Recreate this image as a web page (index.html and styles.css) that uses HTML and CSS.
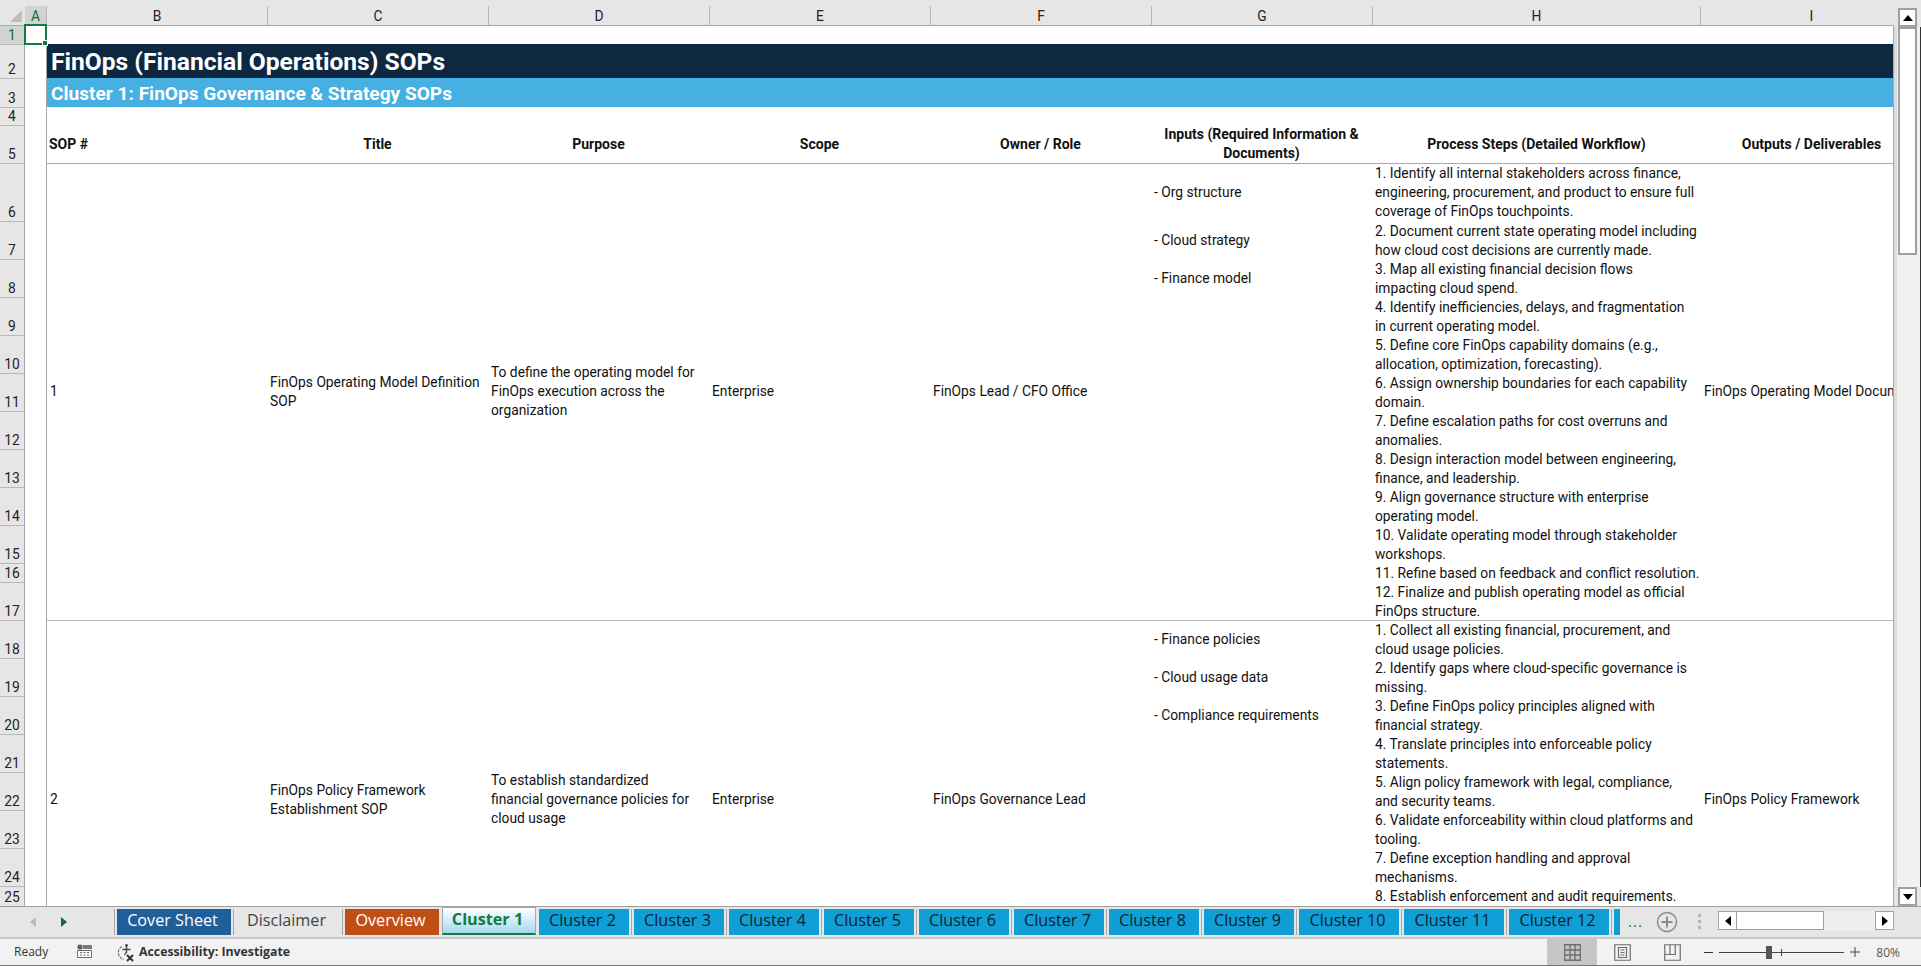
FILE: index.html
```html
<!DOCTYPE html>
<html lang="en">
<head>
<meta charset="UTF-8">
<title>FinOps SOPs - Excel</title>
<link rel="stylesheet" href="styles.css">
</head>
<body>
<div class="app">
    <div class="main">
        <div class="sheet">
            <div class="colbar">
                <div class="corner"></div>
                <div class="colhead selected">A</div>
                <div class="colhead">B</div>
                <div class="colhead">C</div>
                <div class="colhead">D</div>
                <div class="colhead">E</div>
                <div class="colhead">F</div>
                <div class="colhead">G</div>
                <div class="colhead">H</div>
                <div class="colhead">I</div>
            </div>
            <div class="body">
                <div class="rowheads">
                    <div class="rowhead selected h19">1</div>
                    <div class="rowhead h34">2</div>
                    <div class="rowhead h29">3</div>
                    <div class="rowhead h18">4</div>
                    <div class="rowhead h38">5</div>
                    <div class="rowhead h58">6</div>
                    <div class="rowhead h38">7</div>
                    <div class="rowhead h38">8</div>
                    <div class="rowhead h38">9</div>
                    <div class="rowhead h38">10</div>
                    <div class="rowhead h38">11</div>
                    <div class="rowhead h38">12</div>
                    <div class="rowhead h38">13</div>
                    <div class="rowhead h38">14</div>
                    <div class="rowhead h38">15</div>
                    <div class="rowhead h19">16</div>
                    <div class="rowhead h38">17</div>
                    <div class="rowhead h38">18</div>
                    <div class="rowhead h38">19</div>
                    <div class="rowhead h38">20</div>
                    <div class="rowhead h38">21</div>
                    <div class="rowhead h38">22</div>
                    <div class="rowhead h38">23</div>
                    <div class="rowhead h38">24</div>
                    <div class="rowhead h20">25</div>
                </div>
                <div class="col-a"></div>
                <div class="cells">
                    <div class="blank-top"></div>
                    <div class="title">FinOps (Financial Operations) SOPs</div>
                    <div class="subtitle">Cluster 1: FinOps Governance &amp; Strategy SOPs</div>
                    <div class="blank-mid"></div>
                    <div class="cols header-row">
                        <div class="left">SOP #</div>
                        <div>Title</div>
                        <div>Purpose</div>
                        <div>Scope</div>
                        <div>Owner / Role</div>
                        <div>Inputs (Required Information &amp;<br>Documents)</div>
                        <div>Process Steps (Detailed Workflow)</div>
                        <div>Outputs / Deliverables</div>
                    </div>
                    <div class="cols sop sop-first">
                        <div class="cell">1</div>
                        <div class="cell">FinOps Operating Model Definition<br>SOP</div>
                        <div class="cell">To define the operating model for<br>FinOps execution across the<br>organization</div>
                        <div class="cell">Enterprise</div>
                        <div class="cell">FinOps Lead / CFO Office</div>
                        <div class="inputs">
                            <p class="tall">- Org structure</p>
                            <p>- Cloud strategy</p>
                            <p>- Finance model</p>
                        </div>
                        <div class="steps">
                            <p>1. Identify all internal stakeholders across finance,<br>engineering, procurement, and product to ensure full<br>coverage of FinOps touchpoints.</p>
                            <p>2. Document current state operating model including<br>how cloud cost decisions are currently made.</p>
                            <p>3. Map all existing financial decision flows<br>impacting cloud spend.</p>
                            <p>4. Identify inefficiencies, delays, and fragmentation<br>in current operating model.</p>
                            <p>5. Define core FinOps capability domains (e.g.,<br>allocation, optimization, forecasting).</p>
                            <p>6. Assign ownership boundaries for each capability<br>domain.</p>
                            <p>7. Define escalation paths for cost overruns and<br>anomalies.</p>
                            <p>8. Design interaction model between engineering,<br>finance, and leadership.</p>
                            <p>9. Align governance structure with enterprise<br>operating model.</p>
                            <p>10. Validate operating model through stakeholder<br>workshops.</p>
                            <p>11. Refine based on feedback and conflict resolution.</p>
                            <p>12. Finalize and publish operating model as official<br>FinOps structure.</p>
                        </div>
                        <div class="cell">FinOps Operating Model Document</div>
                    </div>
                    <div class="cols sop sop-second">
                        <div class="cell">2</div>
                        <div class="cell">FinOps Policy Framework<br>Establishment SOP</div>
                        <div class="cell">To establish standardized<br>financial governance policies for<br>cloud usage</div>
                        <div class="cell">Enterprise</div>
                        <div class="cell">FinOps Governance Lead</div>
                        <div class="inputs">
                            <p>- Finance policies</p>
                            <p>- Cloud usage data</p>
                            <p>- Compliance requirements</p>
                        </div>
                        <div class="steps">
                            <p>1. Collect all existing financial, procurement, and<br>cloud usage policies.</p>
                            <p>2. Identify gaps where cloud-specific governance is<br>missing.</p>
                            <p>3. Define FinOps policy principles aligned with<br>financial strategy.</p>
                            <p>4. Translate principles into enforceable policy<br>statements.</p>
                            <p>5. Align policy framework with legal, compliance,<br>and security teams.</p>
                            <p>6. Validate enforceability within cloud platforms and<br>tooling.</p>
                            <p>7. Define exception handling and approval<br>mechanisms.</p>
                            <p>8. Establish enforcement and audit requirements.</p>
                        </div>
                        <div class="cell">FinOps Policy Framework</div>
                    </div>
                </div>
                <div class="active-cell"></div>
            </div>
        </div>
        <div class="vscroll">
            <div class="vbtn"><svg width="10" height="6" viewBox="0 0 10 6"><path d="M5 0 10 6H0Z"/></svg></div>
            <div class="vtrack"><div class="vthumb"></div></div>
            <div class="vbtn"><svg width="10" height="6" viewBox="0 0 10 6"><path d="M0 0H10L5 6Z"/></svg></div>
        </div>
    </div>

    <div class="tabbar">
        <div class="tabnav">
            <svg width="6" height="10" viewBox="0 0 6 10" class="nav-prev"><path d="M6 0V10L0 5Z"/></svg>
            <svg width="6" height="10" viewBox="0 0 6 10" class="nav-next"><path d="M0 0V10L6 5Z"/></svg>
        </div>
        <i class="sep"></i>
        <div class="tab tab-cover">Cover Sheet</div>
        <i class="sep"></i>
        <div class="tab tab-plain">Disclaimer</div>
        <i class="sep"></i>
        <div class="tab tab-overview">Overview</div>
        <div class="tab tab-active">Cluster 1</div>
        <div class="tab tab-cluster">Cluster 2</div>
        <i class="sep"></i>
        <div class="tab tab-cluster">Cluster 3</div>
        <i class="sep"></i>
        <div class="tab tab-cluster">Cluster 4</div>
        <i class="sep"></i>
        <div class="tab tab-cluster">Cluster 5</div>
        <i class="sep"></i>
        <div class="tab tab-cluster">Cluster 6</div>
        <i class="sep"></i>
        <div class="tab tab-cluster">Cluster 7</div>
        <i class="sep"></i>
        <div class="tab tab-cluster">Cluster 8</div>
        <i class="sep"></i>
        <div class="tab tab-cluster">Cluster 9</div>
        <i class="sep"></i>
        <div class="tab tab-cluster tab-wide">Cluster 10</div>
        <i class="sep"></i>
        <div class="tab tab-cluster tab-wide">Cluster 11</div>
        <i class="sep"></i>
        <div class="tab tab-cluster tab-wide">Cluster 12</div>
        <i class="sep"></i>
        <div class="tab tab-cluster tab-cut"></div>
        <div class="more">...</div>
        <svg class="add-sheet" width="22" height="22" viewBox="0 0 22 22"><circle cx="11" cy="11" r="9.5" fill="none" stroke="#8c8c8c" stroke-width="1.5"/><path d="M11 5.5v11M5.5 11h11" stroke="#8c8c8c" stroke-width="2"/></svg>
        <div class="grip"><b></b><b></b><b></b></div>
        <div class="hscroll">
            <div class="hbtn"><svg width="6" height="10" viewBox="0 0 6 10"><path d="M6 0V10L0 5Z"/></svg></div>
            <div class="hthumb"></div>
            <div class="htrack"></div>
            <div class="hbtn"><svg width="6" height="10" viewBox="0 0 6 10"><path d="M0 0V10L6 5Z"/></svg></div>
        </div>
    </div>

    <div class="statusbar">
        <span class="ready">Ready</span>
        <svg class="macro-icon" width="15" height="14" viewBox="0 0 15 14">
            <rect x="6" y="1" width="9" height="4" fill="#7a7a7a"/>
            <circle cx="3" cy="3" r="2.6" fill="#5f5f5f"/>
            <path d="M.5 6.5h14v7H.5z" fill="#fff" stroke="#6a6a6a"/>
            <path d="M3 8.5h2M6.5 8.5h2M10 8.5h2M3 11h2M6.5 11h2M10 11h2" stroke="#6a6a6a"/>
        </svg>
        <svg class="access-icon" width="20" height="20" viewBox="0 0 20 20">
            <path d="M6 3.5A7 7 0 0 0 8 16.5" fill="none" stroke="#777" stroke-width="1.2" stroke-dasharray="3 1"/>
            <circle cx="10.5" cy="2.5" r="1.4" fill="#444"/>
            <path d="M10.5 4v6M6.5 6.5h8M10.5 9l-2 3" fill="none" stroke="#444" stroke-width="1.3"/>
            <path d="M11 12l6 6M17 12l-6 6" stroke="#333" stroke-width="2"/>
        </svg>
        <span class="access-text">Accessibility: Investigate</span>
        <div class="status-right">
            <div class="view view-on">
                <svg width="17" height="17" viewBox="0 0 17 17"><path d="M.75.75h15.5v15.5H.75zM6 .75v15.5M11 .75v15.5M.75 6h15.5M.75 11h15.5" fill="none" stroke="#6e6e6e" stroke-width="1.3"/></svg>
            </div>
            <div class="view">
                <svg width="17" height="17" viewBox="0 0 17 17"><path d="M.75.75h15.5v15.5H.75zM4.5 3.5h8v10h-8zM6.5 6h4M6.5 8.5h4M6.5 11h4" fill="none" stroke="#6e6e6e" stroke-width="1.2"/></svg>
            </div>
            <div class="view">
                <svg width="17" height="17" viewBox="0 0 17 17"><path d="M.75.75h15.5v15.5H.75zM.75 10.5h10.5V.75M6 .75v9.75" fill="none" stroke="#6e6e6e" stroke-width="1.2"/></svg>
            </div>
            <div class="zoom">
                <span class="zoom-minus"></span>
                <div class="zoom-track"><span class="zoom-tick"></span><span class="zoom-thumb"></span></div>
                <svg class="zoom-plus" width="10" height="10" viewBox="0 0 10 10"><path d="M5 0v10M0 5h10" stroke="#444"/></svg>
                <span class="zoom-pct">80%</span>
            </div>
        </div>
    </div>
</div>
</body>
</html>
```
FILE: styles.css
```css
* {
    box-sizing: border-box;
}

body {
    margin: 0;
    font-family: Roboto, "Liberation Sans", sans-serif;
    font-size: 13.8px;
    color: #111;
    background-color: #e6e6e6;
}

p {
    margin: 0;
}

.app {
    width: 1921px;
    height: 966px;
    display: flex;
    flex-direction: column;
    overflow: hidden;
}

.main {
    height: 906px;
    flex-shrink: 0;
    display: flex;
}

.sheet {
    width: 1894px;
    display: flex;
    flex-direction: column;
}

/* column letters */
.colbar {
    height: 26px;
    flex-shrink: 0;
    padding-top: 6px;
    display: grid;
    grid-template-columns: 25px 22px 221px 221px 221px 221px 221px 221px 328px 221px;
    border-bottom: 1px solid #a8a8a8;
    overflow: hidden;
}

.corner {
    position: relative;
}

.corner::after {
    content: "";
    position: absolute;
    right: 3px;
    bottom: 3px;
    border-style: solid;
    border-width: 0 0 12px 12px;
    border-color: transparent transparent #bdbdbd transparent;
}

.colhead {
    display: flex;
    align-items: center;
    justify-content: center;
    border-right: 1px solid #b8b8b8;
    color: #222;
}

.colhead:last-child {
    border-right: none;
}

.colhead.selected {
    background-color: #d2d2d2;
    color: #0e6b3a;
}

/* row numbers + cells */
.body {
    position: relative;
    height: 880px;
    display: flex;
}

.rowheads {
    width: 25px;
    border-right: 1px solid #a8a8a8;
    overflow: hidden;
    flex-shrink: 0;
}

.rowhead {
    display: flex;
    align-items: flex-end;
    justify-content: center;
    line-height: 17px;
    border-bottom: 1px solid #b8b8b8;
    color: #222;
}

.rowhead.selected {
    background-color: #d2d2d2;
    color: #0e6b3a;
}

.h18 { height: 18px; }
.h19 { height: 19px; }
.h20 { height: 20px; }
.h29 { height: 29px; }
.h34 { height: 34px; }
.h38 { height: 38px; }
.h58 { height: 58px; }

.col-a {
    width: 22px;
    flex-shrink: 0;
    background-color: #fff;
    border-right: 1px solid #a8a8a8;
}

.cells {
    width: 1847px;
    background-color: #fff;
    border-right: 1px solid #a8a8a8;
    overflow: hidden;
}

.blank-top {
    height: 18px;
}

.title {
    height: 34px;
    padding-left: 4px;
    background-color: #0e2841;
    color: #fff;
    font-size: 24.6px;
    font-weight: 700;
    line-height: 36px;
    white-space: nowrap;
    overflow: hidden;
}

.subtitle {
    height: 29px;
    padding-left: 4px;
    background-color: #45b0e1;
    color: #fff;
    font-size: 19.1px;
    font-weight: 700;
    line-height: 31px;
    white-space: nowrap;
    overflow: hidden;
}

.blank-mid {
    height: 18px;
}

.cols {
    display: grid;
    grid-template-columns: 220px 221px 221px 221px 221px 221px 329px 221px;
    width: 1875px;
}

.header-row {
    height: 39px;
    padding-bottom: 1px;
    align-items: center;
    text-align: center;
    font-size: 14px;
    font-weight: 700;
    line-height: 19px;
    white-space: nowrap;
    border-bottom: 1px solid #a8a8a8;
}

.header-row .left {
    padding-left: 2px;
    text-align: left;
}

.sop {
    line-height: 19px;
    white-space: nowrap;
    border-bottom: 1px solid #b8b8b8;
}

.sop-first {
    height: 457px;
}

.sop-first .cell {
    padding-bottom: 2px;
}

.sop-second {
    height: 358px;
}

.sop-second .inputs {
    margin-top: -1px;
}

.cell {
    display: flex;
    align-items: center;
    padding: 0 3px;
    overflow: hidden;
}

.inputs {
    padding: 0 3px;
}

.inputs p {
    height: 38px;
    display: flex;
    align-items: center;
}

.inputs .tall {
    height: 57px;
}

.steps {
    padding: 0 3px;
}

.sop-first .steps p:first-child {
    margin-bottom: 1px;
}

.active-cell {
    position: absolute;
    left: 24px;
    top: -2px;
    width: 23px;
    height: 21px;
    border: 2px solid #107c41;
}

.active-cell::after {
    content: "";
    position: absolute;
    right: -3px;
    bottom: -3px;
    width: 4px;
    height: 4px;
    background-color: #107c41;
    border: 1px solid #fff;
}

/* vertical scrollbar */
.vscroll {
    width: 27px;
    padding-top: 8px;
    display: flex;
    flex-direction: column;
    align-items: flex-start;
}

.vbtn {
    width: 19px;
    height: 19px;
    margin-left: 4px;
    display: flex;
    align-items: center;
    justify-content: center;
    flex-shrink: 0;
    background-color: #fff;
    border: 2px solid #a0a0a0;
}

.vtrack {
    width: 27px;
    flex-grow: 1;
    padding-left: 1px;
    background-color: #f1f1f1;
    border-left: 3px solid #dcdcdc;
    border-right: 1px solid #333;
}

.vthumb {
    width: 19px;
    height: 228px;
    background-color: #fff;
    border: 2px solid #a0a0a0;
}

/* sheet tabs */
.tabbar {
    height: 33px;
    flex-shrink: 0;
    display: flex;
    align-items: stretch;
    padding-top: 2px;
    padding-bottom: 2px;
    background-color: #e6e6e6;
    border-top: 1px solid #9e9e9e;
    border-bottom: 2px solid #c8c8c8;
    font-family: "Open Sans", "Noto Sans", sans-serif;
    font-size: 16.2px;
}

.tabnav {
    width: 112px;
    padding-left: 30px;
    display: flex;
    align-items: center;
    gap: 25px;
}

.nav-prev {
    fill: #bdbdbd;
}

.nav-next {
    fill: #0e6b3a;
}

.sep {
    width: 1px;
    margin: 0 2px;
    background-color: #a8a8a8;
}

.tab {
    display: flex;
    align-items: center;
    justify-content: center;
    padding: 0 3px 5px 0;
    white-space: nowrap;
}

.tab-cover {
    width: 114px;
    background-color: #215f9a;
    color: #fff;
}

.tab-plain {
    width: 104px;
    color: #444;
}

.tab-overview {
    width: 94px;
    background-color: #c04f15;
    color: #fff;
}

.tab-active {
    width: 94px;
    margin: -2px 3px 0 3px;
    padding-bottom: 3px;
    background: linear-gradient(#fff, #a6d8ef);
    border: 1px solid #a8a8a8;
    border-bottom: 2px solid #107c41;
    color: #107c41;
    font-weight: 700;
}

.tab-cluster {
    width: 90px;
    background-color: #0f9ed5;
    color: #10222b;
}

.tab-wide {
    width: 100px;
}

.tab-cut {
    width: 6px;
    padding: 0;
}

.more {
    width: 24px;
    margin-left: 8px;
    color: #107c41;
    font-size: 15px;
    letter-spacing: 1px;
    line-height: 24px;
}

.add-sheet {
    margin: 2px 0 0 4px;
}

.grip {
    margin: 0 16px 0 20px;
    padding-top: 5px;
    display: flex;
    flex-direction: column;
    gap: 3px;
}

.grip b {
    display: block;
    width: 3px;
    height: 3px;
    background-color: #b4b4b4;
}

.hscroll {
    width: 176px;
    height: 19px;
    margin: 2px 0 0 1px;
    display: flex;
    background-color: #efefef;
}

.hbtn {
    width: 19px;
    display: flex;
    align-items: center;
    justify-content: center;
    background-color: #fff;
    border: 1px solid #a0a0a0;
}

.hthumb {
    width: 87px;
    background-color: #fff;
    border: 1px solid #a0a0a0;
    border-left: none;
}

.htrack {
    flex-grow: 1;
}

/* status bar */
.statusbar {
    height: 27px;
    flex-shrink: 0;
    display: flex;
    align-items: center;
    padding-left: 14px;
    padding-bottom: 2px;
    background-color: #f2f2f2;
    border-bottom: 1px solid #777;
    font-family: "Open Sans", "Noto Sans", sans-serif;
    font-size: 12px;
    color: #333;
}

.ready {
    width: 63px;
}

.access-icon {
    margin-left: 24px;
    margin-top: 3px;
}

.access-text {
    margin-left: 3px;
    font-size: 12.3px;
    font-weight: 700;
}

.status-right {
    margin-left: auto;
    height: 26px;
    margin-bottom: -2px;
    display: flex;
}

.view {
    width: 50px;
    display: flex;
    align-items: center;
    justify-content: center;
}

.view-on {
    background-color: #c6c6c6;
}

.zoom {
    width: 224px;
    padding-left: 7px;
    padding-right: 21px;
    display: flex;
    align-items: center;
}

.zoom-minus {
    width: 9px;
    height: 1px;
    background-color: #333;
}

.zoom-track {
    position: relative;
    width: 125px;
    height: 1px;
    margin: 0 6px;
    background-color: #444;
}

.zoom-tick {
    position: absolute;
    left: 62px;
    top: -3px;
    width: 1px;
    height: 7px;
    background-color: #444;
}

.zoom-thumb {
    position: absolute;
    left: 47px;
    top: -6px;
    width: 6px;
    height: 13px;
    background-color: #555;
}

.zoom-pct {
    margin-left: auto;
    color: #555;
}
```
